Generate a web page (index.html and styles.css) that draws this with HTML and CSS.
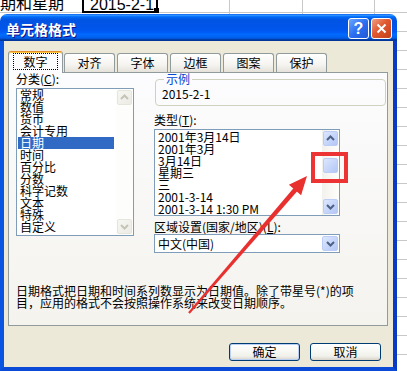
FILE: index.html
```html
<!DOCTYPE html>
<html lang="zh-CN">
<head>
  <meta charset="UTF-8">
  <title>单元格格式</title>
  <link rel="stylesheet" href="styles.css">
</head>
<body>

  <!-- spreadsheet behind the dialog -->
  <div class="sheet">
    <span class="sheet-text">期和星期</span>
    <span class="sheet-cell"><span class="cell-value">2015-2-1</span><i class="fill-handle"></i></span>
  </div>

  <div class="window">
    <div class="titlebar">
      <span class="title">单元格格式</span>
      <div class="title-buttons">
        <span class="tbtn help">?</span>
        <span class="tbtn close">
          <svg width="11" height="11" viewBox="0 0 11 11"><path d="M1.5 1.5 L9.5 9.5 M9.5 1.5 L1.5 9.5" stroke="#fff" stroke-width="2" fill="none"/></svg>
        </span>
      </div>
    </div>

    <div class="frame">
      <div class="tabs">
        <div class="tab active"><span class="tab-focus">数字</span></div>
        <div class="tab">对齐</div>
        <div class="tab">字体</div>
        <div class="tab">边框</div>
        <div class="tab">图案</div>
        <div class="tab">保护</div>
      </div>

      <div class="panel">
        <div class="panel-top">
          <!-- left: category list -->
          <div class="col-left">
            <div class="label">分类(<u>C</u>):</div>
            <div class="listbox category">
              <div class="items">
                <div class="item">常规</div>
                <div class="item">数值</div>
                <div class="item">货币</div>
                <div class="item">会计专用</div>
                <div class="item selected">日期</div>
                <div class="item">时间</div>
                <div class="item">百分比</div>
                <div class="item">分数</div>
                <div class="item">科学记数</div>
                <div class="item">文本</div>
                <div class="item">特殊</div>
                <div class="item">自定义</div>
              </div>
              <div class="scrollbar disabled">
                <span class="sb-btn"><svg width="13" height="13" viewBox="0 0 13 13"><path d="M3 8 L6.5 4.5 L10 8" stroke-width="2" fill="none"/></svg></span>
                <span class="sb-btn down"><svg width="13" height="13" viewBox="0 0 13 13"><path d="M3 5 L6.5 8.5 L10 5" stroke-width="2" fill="none"/></svg></span>
              </div>
            </div>
          </div>

          <!-- right: sample, type, locale -->
          <div class="col-right">
            <fieldset class="sample">
              <legend>示例</legend>
              <div class="sample-value">2015-2-1</div>
            </fieldset>

            <div class="label type-label">类型(<u>T</u>):</div>
            <div class="listbox types">
              <div class="items">
                <div class="item">2001年3月14日</div>
                <div class="item">2001年3月</div>
                <div class="item">3月14日</div>
                <div class="item">星期三</div>
                <div class="item">三</div>
                <div class="item">2001-3-14</div>
                <div class="item">2001-3-14 1:30 PM</div>
              </div>
              <div class="scrollbar">
                <span class="sb-btn"><svg width="13" height="13" viewBox="0 0 13 13"><path d="M3 8 L6.5 4.5 L10 8" stroke-width="2" fill="none"/></svg></span>
                <span class="sb-thumb"></span>
                <span class="sb-btn down"><svg width="13" height="13" viewBox="0 0 13 13"><path d="M3 5 L6.5 8.5 L10 5" stroke-width="2" fill="none"/></svg></span>
              </div>
            </div>

            <div class="label locale-label">区域设置(国家/地区)(<u>L</u>):</div>
            <div class="select">
              <span>中文(中国)</span>
              <span class="sb-btn select-btn"><svg width="13" height="13" viewBox="0 0 13 13"><path d="M3 5 L6.5 8.5 L10 5" stroke-width="2" fill="none"/></svg></span>
            </div>
          </div>
        </div>

        <p class="desc">日期格式把日期和时间系列数显示为日期值。除了带星号(*)的项<br>目，应用的格式不会按照操作系统来改变日期顺序。</p>
      </div>

      <div class="actions">
        <button class="btn default">确定</button>
        <button class="btn">取消</button>
      </div>
    </div>
  </div>

  <!-- red annotation drawn over the screenshot -->
  <svg class="annotation" width="407" height="371" viewBox="0 0 407 371">
    <rect x="313" y="154" width="33" height="27" fill="none" stroke="#ec3434" stroke-width="4"/>
    <polygon points="188.2,312.3 294.1,187.4 297.9,190.6 189.8,313.7" fill="#e8312f"/>
    <polygon points="307,176 288.9,184.8 301.1,195.2" fill="#e8312f"/>
  </svg>

</body>
</html>
```

FILE: styles.css
```css
* {
  box-sizing: border-box;
}

body {
  margin: 0;
  width: 407px;
  height: 371px;
  overflow: hidden;
  position: relative;
  font-family: "Noto Sans CJK SC", sans-serif;
  font-size: 12px;
  color: #000;
  background: #fff repeating-linear-gradient(to bottom, transparent 0, transparent 12px, #c8c8c8 12px, #c8c8c8 13px, transparent 13px, transparent 19px);
}

/* Spreadsheet strip */
.sheet {
  height: 14px;
  display: flex;
  align-items: flex-start;
  overflow: hidden;
  background: linear-gradient(to right, transparent 229px, #c8c8c8 229px, #c8c8c8 230px, transparent 230px, transparent 302px, #c8c8c8 302px, #c8c8c8 303px, transparent 303px, transparent 374px, #c8c8c8 374px, #c8c8c8 375px, transparent 375px);
}

.sheet-text {
  font-size: 16px;
  line-height: 16px;
  margin-top: -6px;
  white-space: nowrap;
}

.sheet-cell {
  position: relative;
  margin-left: 18px;
  width: 76px;
  height: 13px;
  border: 2px solid #000;
  border-top: 0;
  background: #fff;
  padding-left: 6px;
}

.cell-value {
  display: block;
  font-family: "Liberation Sans", sans-serif;
  font-size: 16px;
  line-height: 16px;
  margin-top: -3px;
}

.fill-handle {
  position: absolute;
  right: -3px;
  bottom: -2px;
  width: 5px;
  height: 5px;
  background: #000;
}

/* Window */
.window {
  width: 397px;
  border-radius: 7px 7px 0 0;
  overflow: hidden;
}

.titlebar {
  height: 27px;
  display: flex;
  align-items: center;
  justify-content: space-between;
  padding: 2px 5px 0 6px;
  background: linear-gradient(to bottom, #0058ee 0%, #3593ff 4%, #288eff 6%, #127dff 8%, #036ffc 10%, #0262ee 14%, #0057e5 20%, #0054e3 24%, #0055eb 56%, #005bf5 66%, #026afe 76%, #0062ef 86%, #0052d6 92%, #0040ab 94%, #003092 100%);
}

.title {
  color: #fff;
  font-weight: bold;
  font-size: 14px;
  line-height: 16px;
  text-shadow: 1px 1px #0f1089;
}

.title-buttons {
  display: flex;
  gap: 2px;
}

.tbtn {
  width: 21px;
  height: 21px;
  border: 1px solid #fff;
  border-radius: 3px;
  display: flex;
  align-items: center;
  justify-content: center;
}

.help {
  background: linear-gradient(135deg, #6ea6ff, #2c6ff0 50%, #1f57d6);
  color: #fff;
  font-family: "Liberation Sans", sans-serif;
  font-weight: bold;
  font-size: 16px;
  line-height: 16px;
}

.close {
  background: linear-gradient(135deg, #f0a088, #e0582e 45%, #c2401c);
}

.frame {
  background: #ece9d8;
  border: 4px solid #0a54e2;
  border-top: 0;
  border-right-color: #0a3ac4;
  border-bottom-color: #0a4ad6;
  padding: 10px 0 6px 0;
}

/* Tabs */
.tabs {
  display: flex;
  align-items: flex-end;
  gap: 2px;
  height: 21px;
  padding-left: 4px;
}

.tab {
  width: 51px;
  height: 19px;
  border: 1px solid #919b9c;
  border-bottom: 0;
  border-radius: 3px 3px 0 0;
  background: linear-gradient(#ffffff, #f5f4f0 60%, #e4e2d9);
  text-align: center;
  line-height: 18px;
}

.tab.active {
  position: relative;
  z-index: 1;
  width: 55px;
  height: 22px;
  margin-right: -1px;
  margin-bottom: -1px;
  padding: 1px 4px 0;
  background: #fcfcfe;
  border-top: 1px solid #e68b2c;
  box-shadow: inset 0 1px #ffc73c;
}

.tab-focus {
  display: block;
  height: 17px;
  border: 1px dotted #000;
  line-height: 15px;
}

/* Tab panel */
.panel {
  margin-left: 4px;
  width: 380px;
  height: 254px;
  border: 1px solid #919b9c;
  background: linear-gradient(#fcfcfe, #f4f3ee);
  padding: 0 0 0 7px;
}

.panel-top {
  display: flex;
  align-items: flex-start;
}

.col-left {
  width: 118px;
}

.col-right {
  width: 232px;
  margin-left: 20px;
}

.label {
  line-height: 12px;
  white-space: nowrap;
}

.listbox {
  display: flex;
  border: 1px solid #7f9db9;
  background: #fff;
}

.category {
  height: 148px;
  margin-top: 3px;
}

.category .items {
  flex: 1;
  padding: 0 2px 0 1px;
}

.types {
  width: 186px;
  height: 87px;
  margin-top: 3px;
}

.types .items {
  flex: 1;
  padding: 1px 0 0 3px;
}

.item {
  line-height: 12px;
  height: 12px;
  white-space: nowrap;
}

.category .item {
  padding-left: 2px;
}

.item.selected {
  background: #316ac5;
  color: #fff;
}

/* Scrollbars */
.scrollbar {
  width: 17px;
  display: flex;
  flex-direction: column;
  padding: 1px;
  background: linear-gradient(to right, #f3f1ec, #fefefb);
}

.sb-btn, .sb-thumb {
  height: 15px;
  border: 1px solid #bccdf5;
  border-radius: 2px;
  background: linear-gradient(135deg, #dde7fe, #c3d3fa 60%, #b4c8f5);
  display: flex;
  align-items: center;
  justify-content: center;
}

.sb-btn svg {
  stroke: #4d6185;
}

.sb-thumb {
  margin-top: 12px;
}

.sb-btn.down {
  margin-top: auto;
}

.scrollbar.disabled {
  background: #fdfdfb;
}

.scrollbar.disabled .sb-btn {
  border-color: #e6e5dc;
  background: linear-gradient(135deg, #f7f7f3, #ecebe4);
}

.scrollbar.disabled .sb-btn svg {
  stroke: #c6c4b7;
}

/* Sample group */
.sample {
  margin: 0 0 0 1px;
  width: 231px;
  padding: 0 6px 5px;
  border: 1px solid #d0d0bf;
  border-radius: 4px;
}

.sample legend {
  margin-left: 2px;
  padding: 0 2px;
  line-height: 12px;
  color: #0046d5;
}

.sample-value {
  margin-top: 3px;
  line-height: 12px;
}

.type-label {
  margin-top: 8px;
}

.locale-label {
  margin-top: 5px;
}

.select {
  margin-top: 1px;
  width: 186px;
  height: 19px;
  border: 1px solid #7f9db9;
  background: #fff;
  display: flex;
  align-items: center;
  padding-left: 3px;
  line-height: 12px;
}

.select-btn {
  margin-left: auto;
  margin-right: 1px;
  width: 16px;
  height: 15px;
}

.desc {
  margin: 32px 0 0;
  line-height: 12px;
  white-space: nowrap;
}

/* Dialog buttons */
.actions {
  display: flex;
  justify-content: flex-end;
  gap: 10px;
  margin-top: 17px;
  padding-right: 12px;
}

.btn {
  width: 71px;
  height: 18px;
  padding: 0;
  border: 1px solid #003c74;
  border-radius: 3px;
  background: linear-gradient(#ffffff, #f2f2ec 75%, #d8d3c8);
  font-family: "Noto Sans CJK SC", sans-serif;
  font-size: 12px;
  line-height: 16px;
  color: #000;
}

.btn.default {
  box-shadow: inset 0 0 0 1px #b9cff3;
}

/* Annotation overlay */
.annotation {
  position: absolute;
  left: 0;
  top: 0;
  pointer-events: none;
}
```
